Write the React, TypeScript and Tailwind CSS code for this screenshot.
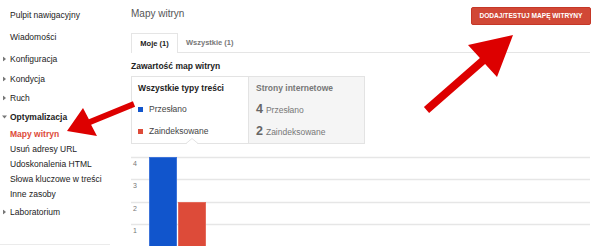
import React from 'react'

type NavItem = { label: string; h: number; kind?: 'closed' | 'open' | 'active' | 'sub' }

const nav: NavItem[] = [
  { label: 'Pulpit nawigacyjny', h: 22 },
  { label: 'Wiadomości', h: 22 },
  { label: 'Konfiguracja', h: 22, kind: 'closed' },
  { label: 'Kondycja', h: 18, kind: 'closed' },
  { label: 'Ruch', h: 20, kind: 'closed' },
  { label: 'Optymalizacja', h: 18, kind: 'open' },
  { label: 'Mapy witryn', h: 15, kind: 'active' },
  { label: 'Usuń adresy URL', h: 15, kind: 'sub' },
  { label: 'Udoskonalenia HTML', h: 15, kind: 'sub' },
  { label: 'Słowa kluczowe w treści', h: 15, kind: 'sub' },
  { label: 'Inne zasoby', h: 15, kind: 'sub' },
  { label: 'Laboratorium', h: 22, kind: 'closed' },
]

function Caret({ open }: { open?: boolean }) {
  return (
    <svg width="5" height="5" viewBox="0 0 5 5" className="absolute left-[2px] top-1/2 -translate-y-1/2">
      {open ? <polygon points="0,1 5,1 2.5,4" fill="#777" /> : <polygon points="1,0 4,2.5 1,5" fill="#777" />}
    </svg>
  )
}

function Sidebar() {
  return (
    <aside className="w-[110px] shrink-0 h-[245px] border-b border-[#ebebeb] pt-[4px]">
      {nav.map(n => (
        <div key={n.label} style={{ height: n.h }} className="relative flex items-center pl-[10px]">
          {(n.kind === 'closed' || n.kind === 'open') && <Caret open={n.kind === 'open'} />}
          <span className={`text-[8.5px] leading-[10px] whitespace-nowrap ${n.kind === 'open' ? 'font-bold text-[#222]' : n.kind === 'active' ? 'font-bold text-[#dd4b39]' : 'text-[#222]'}`}>
            {n.label}
          </span>
        </div>
      ))}
    </aside>
  )
}

function SummaryCard() {
  return (
    <div className="mt-[5px] w-[234px] h-[68px] border border-[#e3e3e3] flex">
      <div className="relative w-[116px] pl-[6px] pt-[6px]">
        <p className="text-[8.5px] leading-[10px] font-bold text-[#222]">Wszystkie typy treści</p>
        <div className="mt-[11px] flex items-center gap-[6px] h-[10px]">
          <span className="w-[5px] h-[5px] bg-[#1155cc]" />
          <span className="text-[8.5px] text-[#444]">Przesłano</span>
        </div>
        <div className="mt-[12px] flex items-center gap-[6px] h-[10px]">
          <span className="w-[5px] h-[5px] bg-[#dd4b39]" />
          <span className="text-[8.5px] text-[#444]">Zaindeksowane</span>
        </div>
        <svg width="12" height="6" viewBox="0 0 12 6" className="absolute left-[54px] -bottom-px">
          <polyline points="0,5.5 6,0.5 12,5.5" fill="#fff" stroke="#e3e3e3" />
          <rect x="1" y="5" width="10" height="1" fill="#fff" />
        </svg>
      </div>
      <div className="flex-1 bg-[#f5f5f5] border-l border-[#e3e3e3] pl-[7px] pt-[6px]">
        <p className="text-[8.5px] leading-[10px] font-bold text-[#777]">Strony internetowe</p>
        <div className="mt-[7px] flex items-baseline gap-[3px] h-[14px]">
          <span className="text-[12.5px] font-bold text-[#666]">4</span>
          <span className="text-[8.5px] text-[#777]">Przesłano</span>
        </div>
        <div className="mt-[8px] flex items-baseline gap-[3px] h-[14px]">
          <span className="text-[12.5px] font-bold text-[#666]">2</span>
          <span className="text-[8.5px] text-[#777]">Zaindeksowane</span>
        </div>
      </div>
    </div>
  )
}

function Chart() {
  const lines = [7.5, 29.5, 52.5, 74.5]
  return (
    <svg width="459" height="96" className="mt-[6px] block">
      {lines.map((y, i) => (
        <g key={y}>
          <line x1="0" x2="459" y1={y} y2={y} stroke="#e6e6e6" strokeWidth="1.5" />
          <text x="2" y={y + 8.5} fontSize="7" fill="#777" fontFamily="Liberation Sans, Arial, sans-serif">{4 - i}</text>
        </g>
      ))}
      <rect x="18.5" y="7.5" width="27" height="95" fill="#1155cc" stroke="#3d73d9" />
      <rect x="47.5" y="52.5" width="27" height="50" fill="#dd4b39" stroke="#e46a5a" />
    </svg>
  )
}

export default function App() {
  return (
    <div className="relative w-[600px] h-[246px] overflow-hidden bg-white flex font-['Liberation_Sans',Arial,sans-serif]">
      <Sidebar />
      <main className="flex-1 pl-[21px] pr-[10px] pt-[7px]">
        <div className="flex justify-between items-start h-[18px]">
          <h1 className="text-[10px] leading-[14px] text-[#555]">Mapy witryn</h1>
          <button className="w-[120px] h-[18px] mr-[-1px] bg-[#d14836] border border-[#c53727] rounded-[2px] text-white font-bold text-[6.6px] flex items-center justify-center whitespace-nowrap">
            DODAJ/TESTUJ MAPĘ WITRYNY
          </button>
        </div>
        <div className="mt-[8px] h-[20px] flex items-start border-b border-[#e5e5e5]">
          <div className="w-[47px] h-[20px] bg-white border border-b-0 border-[#e5e5e5] flex items-center justify-center text-[7.5px] font-bold text-[#222]">
            Moje (1)
          </div>
          <div className="ml-[8px] h-[19px] flex items-center text-[7.5px] font-bold text-[#777]">Wszystkie (1)</div>
        </div>
        <h2 className="mt-[8px] text-[8.5px] leading-[10px] font-bold text-[#222]">Zawartość map witryn</h2>
        <SummaryCard />
        <Chart />
      </main>
      <svg width="600" height="246" className="absolute inset-0 pointer-events-none">
        <polygon points="67,131 97,136 91.1,124.8 135.1,106.8 132.9,101.2 88.9,119.2 83,108" fill="#dd0000" />
        <polygon points="513,35 497,77 485.1,64 429.1,113 423.9,107 479.9,58 468,45" fill="#dd0000" />
      </svg>
    </div>
  )
}
